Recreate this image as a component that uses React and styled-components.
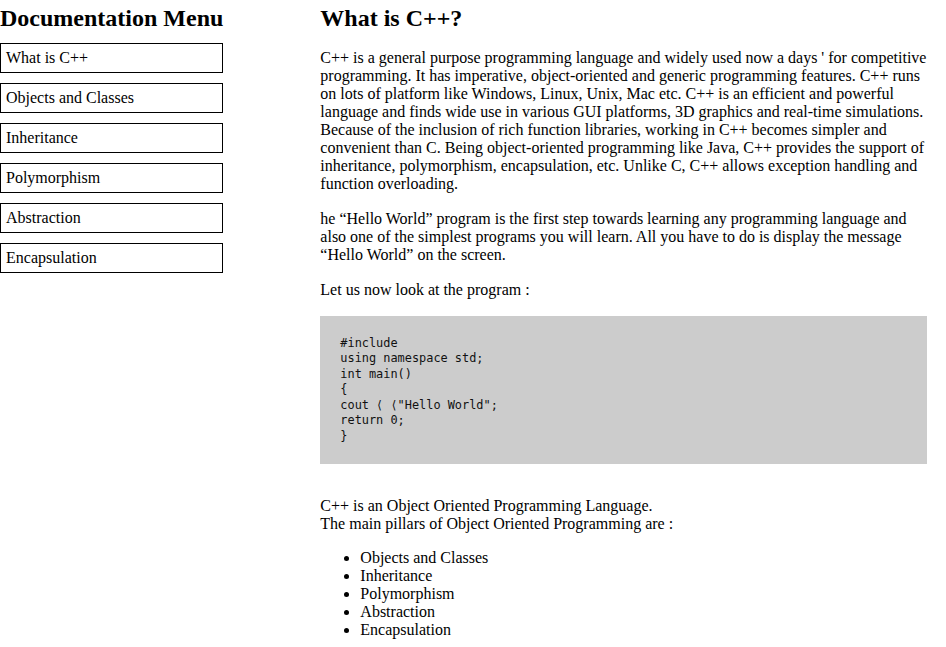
import React from "react";
import styled, { createGlobalStyle } from "styled-components";

const GlobalStyle = createGlobalStyle`
  body {
    margin: 0;
    font-family: "Liberation Serif", "Times New Roman", serif;
    font-size: 16px;
    color: #000;
    background: #fff;
  }
`;

const menu = [
  "What is C++",
  "Objects and Classes",
  "Inheritance",
  "Polymorphism",
  "Abstraction",
  "Encapsulation",
];

const codeLines = [
  "#include",
  "using namespace std;",
  "int main()",
  "{",
  "cout \u27e8 \u27e8\"Hello World\";",
  "return 0;",
  "}",
];

// rest of the sections, below the fold
const moreSections = [
  {
    title: "Objects and Classes",
    text: [
      "A class is a user defined data type which binds data and the functions that work on that data together. An object is an instance of a class: when a class is defined no memory is allocated, but when it is instantiated memory is given to the object.",
      "Data members are the variables and member functions are the functions used to manipulate these variables; together they define the properties and behaviour of the objects of a class.",
    ],
  },
  {
    title: "Inheritance",
    text: [
      "The capability of a class to derive properties and characteristics from another class is called inheritance. It is one of the most important features of Object Oriented Programming.",
      "The class whose properties are inherited is called the base class, and the class that inherits them is called the derived class.",
    ],
  },
  {
    title: "Polymorphism",
    text: [
      "Polymorphism means having many forms. In C++ it is mainly divided into two types: compile time polymorphism, achieved by function and operator overloading, and runtime polymorphism, achieved by function overriding.",
    ],
  },
  {
    title: "Abstraction",
    text: [
      "Data abstraction refers to providing only essential information about the data to the outside world, hiding the background details or implementation.",
    ],
  },
  {
    title: "Encapsulation",
    text: [
      "Encapsulation is defined as wrapping up of data and information under a single unit. It binds together the data and the functions that manipulate them.",
    ],
  },
];

const App = () => {
  return (
    <>
      <GlobalStyle />
      <Page>
        <Nav id="navbar">
          <NavTitle>Documentation Menu</NavTitle>
          {menu.map((item) => (
            <NavLink key={item} href={`#${item.replace(/ /g, "_")}`}>
              {item}
            </NavLink>
          ))}
        </Nav>

        <Main id="main-doc">
          <Section id="What_is_C++">
            <Title>What is C++?</Title>
            <Text>
              C++ is a general purpose programming language and widely used now a days ' for
              competitive programming. It has imperative, object-oriented and generic programming
              features. C++ runs on lots of platform like Windows, Linux, Unix, Mac etc. C++ is an
              efficient and powerful language and finds wide use in various GUI platforms, 3D
              graphics and real-time simulations. Because of the inclusion of rich function
              libraries, working in C++ becomes simpler and convenient than C. Being
              object-oriented programming like Java, C++ provides the support of inheritance,
              polymorphism, encapsulation, etc. Unlike C, C++ allows exception handling and
              function overloading.
            </Text>
            <Text>
              he “Hello World” program is the first step towards learning any programming language
              and also one of the simplest programs you will learn. All you have to do is display
              the message “Hello World” on the screen.
            </Text>
            <Text>Let us now look at the program :</Text>
            <CodeBlock>
              {codeLines.map((line, i) => (
                <CodeLine key={i}>{line}</CodeLine>
              ))}
            </CodeBlock>
            <Text>
              C++ is an Object Oriented Programming Language.
              <br />
              The main pillars of Object Oriented Programming are :
            </Text>
            <List>
              {menu.slice(1).map((item) => (
                <li key={item}>{item}</li>
              ))}
            </List>
          </Section>

          {moreSections.map((s) => (
            <Section key={s.title} id={s.title.replace(/ /g, "_")}>
              <Title>{s.title}</Title>
              {s.text.map((t, i) => (
                <Text key={i}>{t}</Text>
              ))}
            </Section>
          ))}
        </Main>
      </Page>
    </>
  );
};

export default App;

const Page = styled.div`
  display: flex;
  align-items: flex-start;
  padding-top: 5px;
`;

const Nav = styled.nav`
  position: sticky;
  top: 5px;
  flex: 0 0 223px;
  display: flex;
  flex-direction: column;
  gap: 10px;
`;

const NavTitle = styled.h2`
  margin: 0 0 1px;
  font-size: 24px;
  font-weight: bold;
  white-space: nowrap;
`;

const NavLink = styled.a`
  display: block;
  box-sizing: border-box;
  height: 30px;
  padding: 5px 5px 0;
  border: 1px solid #000;
  color: #000;
  text-decoration: none;
`;

const Main = styled.main`
  flex: 0 0 607px;
  margin-left: 97px;
`;

const Section = styled.section`
  margin-bottom: 24px;
`;

const Title = styled.h2`
  margin: 0;
  font-size: 24px;
  font-weight: bold;
`;

const Text = styled.p`
  margin: 17px 0 16px;
`;

const CodeBlock = styled.pre`
  margin: 17px 0 33px;
  padding: 19.5px 20px;
  background: #cccccc;
  font-family: "DejaVu Sans Mono", "Liberation Mono", monospace;
  font-size: 11.9px;
  line-height: 15.5px;
  color: #111;
`;

const CodeLine = styled.div`
  white-space: pre;
`;

const List = styled.ul`
  margin: 16px 0;
  padding-left: 40px;
`;
